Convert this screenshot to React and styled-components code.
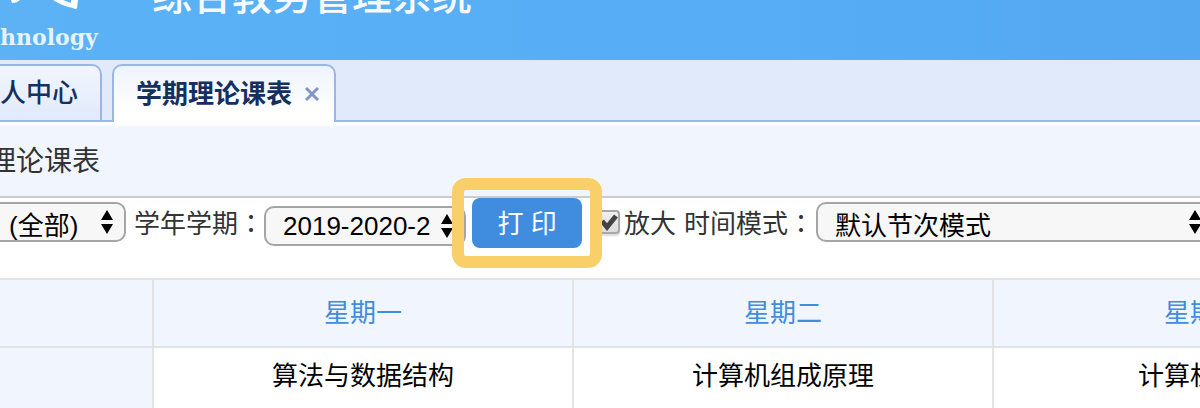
import React from "react";
import styled, { createGlobalStyle, css } from "styled-components";

const GlobalStyle = createGlobalStyle`
  *, *::before, *::after { box-sizing: border-box; }
  body {
    margin: 0;
    background: #fff;
    color: #333;
    font: 26px/36px "Liberation Sans", "Noto Sans CJK SC", sans-serif;
  }
`;

const Page = styled.div`
  min-height: 100vh;
  overflow: hidden;
`;

const Banner = styled.header`
  display: flex;
  align-items: flex-end;
  height: 60px;
  overflow: hidden;
  color: #fff;
  background: linear-gradient(90deg, #5cb2f5, #57adf6 60%, #53a8f1);
`;

const School = styled.div`
  display: flex;
  flex-direction: column;
  justify-content: flex-end;
  flex: none;
  width: 152px;
  height: 60px;
  padding-bottom: 8px;
`;

const LogoMark = styled.svg`
  display: block;
  flex: none;
  width: 100px;
  height: 12px;
  margin-bottom: 10px;
`;

const SchoolName = styled.span`
  font: bold 22px/30px "DejaVu Serif", serif;
  opacity: 0.85;
`;

const SystemName = styled.h1`
  margin: 0 0 40px;
  flex: none;
  font-size: 40px;
  line-height: 48px;
  font-weight: 500;
  opacity: 0.95;
`;

const TabBar = styled.nav`
  display: flex;
  gap: 10px;
  padding: 4px 0 0;
  background: #e1eafb;
  border-bottom: 2px solid #9bb6e4;
`;

const Tab = styled.div`
  display: flex;
  align-items: center;
  gap: 10px;
  height: 56px;
  padding: 0 22px;
  border: 2px solid #9bb6e4;
  border-bottom: 0;
  border-radius: 10px 10px 0 0;
  background: linear-gradient(#f1f5fe, #e1eafb);
  &:first-child { margin-left: -50px; }
  ${(p) => p.$active && css`
    height: 58px;
    margin-bottom: -2px;
    padding-right: 12px;
    background: linear-gradient(#eef3fe, #fff 80%);
  `}
`;

const TabLink = styled.a`
  color: #15305f;
  font-weight: ${(p) => (p.$active ? 700 : 500)};
  text-decoration: none;
  white-space: nowrap;
`;

const CloseButton = styled.button`
  display: grid;
  place-items: center;
  width: 20px;
  height: 20px;
  padding: 0;
  border: 0;
  background: none;
`;

const TitleBar = styled.div`
  padding: 18px 0 16px;
  border-top: 4px solid #fff;
  border-bottom: 2px solid #ccc;
  background: #f1f5fe;
`;

const Title = styled.h2`
  margin: 0 0 0 -68px;
  font-size: 28px;
  line-height: 36px;
  font-weight: 400;
`;

const Filters = styled.form`
  display: flex;
  align-items: flex-start;
  height: 80px;
  white-space: nowrap;
`;

const FilterLabel = styled.label`
  flex: none;
  margin-left: ${(p) => p.$gap || 0}px;
  line-height: 52px;
`;

const Colon = styled.span`
  font-family: "Noto Sans CJK TC", sans-serif;
  line-height: 1;
`;

const SelectBox = styled.div`
  display: grid;
  align-items: center;
  flex: ${(p) => (p.$width ? "none" : "1")};
  width: ${(p) => (p.$width ? `${p.$width}px` : "auto")};
  margin-top: ${(p) => (p.$low ? 8 : 4)}px;
  & > * { grid-area: 1 / 1; }
  & > svg { justify-self: end; margin-right: 13px; pointer-events: none; }
  &:first-child { margin-left: -10px; }
  &:last-child { margin: 4px -14px 0 2px; }
`;

const Select = styled.select`
  appearance: none;
  width: 100%;
  height: 40px;
  padding: ${(p) => (p.$low ? "0 17px 2px" : "4px 17px 0")};
  border: 2px solid #a5a5a5;
  border-radius: 10px;
  background: #f7f7f7;
  color: #000;
  font: inherit;
`;

const PrintSpot = styled.div`
  position: relative;
  z-index: 1;
  flex: none;
  margin: 0 14px 0 6px;
  &::after {
    content: "";
    position: absolute;
    inset: -20px;
    border: 12px solid #f8cf68;
    border-radius: 14px;
    pointer-events: none;
  }
`;

const PrintButton = styled.button`
  display: block;
  width: 110px;
  height: 50px;
  padding: 2px 0 0;
  border: 0;
  border-radius: 8px;
  background: #408de0;
  color: #fff;
  font: inherit;
`;

const CheckBox = styled.span`
  display: grid;
  flex: none;
  width: 24px;
  height: 24px;
  margin: 12px 4px 0 0;
  & > * { grid-area: 1 / 1; }
  & > svg { pointer-events: none; }
`;

const CheckInput = styled.input`
  appearance: none;
  width: 24px;
  height: 24px;
  margin: 0;
  border: 2px solid #a8a8a8;
  border-radius: 4px;
  background: linear-gradient(#f0f0f0, #dcdcdc);
  box-shadow: 0 2px 2px #ddd;
`;

const Timetable = styled.table`
  table-layout: fixed;
  width: calc(154px + 105vw);
  border-collapse: separate;
  border-spacing: 0;
  border-top: 2px solid #e3e3e3;
`;

const cell = css`
  padding: 0;
  border: solid #e3e3e3;
  border-width: 0 2px 0 0;
  font-weight: 400;
  text-align: center;
`;

const HeadCell = styled.th`
  ${cell}
  width: ${(p) => (p.$corner ? "154px" : "35vw")};
  height: 68px;
  border-bottom-width: 2px;
  background: #f1f5fe;
  color: #408de0;
`;

const SideCell = styled.th`
  ${cell}
  background: #f1f5fe;
`;

const Cell = styled.td`
  ${cell}
  height: 60px;
  padding-top: 10px;
  vertical-align: top;
  color: #000;
`;

const Arrows = () => (
  <svg width="12" height="24" viewBox="0 0 12 24" aria-hidden="true">
    <path d="M6 0 12 10H0ZM0 14H12L6 24Z" fill="#000" />
  </svg>
);

const days = ["星期一", "星期二", "星期三"];
const courses = ["算法与数据结构", "计算机组成原理", "计算机网络"];

export default function App() {
  return (
    <Page>
      <GlobalStyle />
      <Banner>
        <School>
          <LogoMark viewBox="0 0 100 12" aria-hidden="true">
            <path d="M11 0H20Q17 3 12 3ZM53 0H63L71 3V0H78L77 8Q76 10 73 8Q62 6 53 0Z" fill="#fff" />
          </LogoMark>
          <SchoolName>hnology</SchoolName>
        </School>
        <SystemName>综合教务管理系统</SystemName>
      </Banner>
      <TabBar>
        <Tab>
          <TabLink href="#home">个人中心</TabLink>
        </Tab>
        <Tab $active>
          <TabLink href="#timetable" $active>学期理论课表</TabLink>
          <CloseButton type="button" aria-label="关闭">
            <svg width="14" height="14" viewBox="0 0 14 14">
              <path d="M1 1 13 13M13 1 1 13" stroke="#8296c4" strokeWidth="3" />
            </svg>
          </CloseButton>
        </Tab>
      </TabBar>
      <TitleBar>
        <Title>学期理论课表</Title>
      </TitleBar>
      <Filters>
        <SelectBox $width={136}>
          <Select aria-label="范围">
            <option>(全部)</option>
          </Select>
          <Arrows />
        </SelectBox>
        <FilterLabel htmlFor="term" $gap={8}>学年学期<Colon>：</Colon></FilterLabel>
        <SelectBox $width={202} $low>
          <Select id="term" $low>
            <option>2019-2020-2</option>
          </Select>
          <Arrows />
        </SelectBox>
        <PrintSpot>
          <PrintButton type="button">打 印</PrintButton>
        </PrintSpot>
        <CheckBox>
          <CheckInput id="zoom" type="checkbox" defaultChecked />
          <svg width="24" height="24" viewBox="0 0 24 24" aria-hidden="true">
            <path d="M6 11 11 17 20 6" fill="none" stroke="#444" strokeWidth="5" />
          </svg>
        </CheckBox>
        <FilterLabel htmlFor="zoom">放大</FilterLabel>
        <FilterLabel htmlFor="mode" $gap={8}>时间模式<Colon>：</Colon></FilterLabel>
        <SelectBox>
          <Select id="mode">
            <option>默认节次模式</option>
          </Select>
          <Arrows />
        </SelectBox>
      </Filters>
      <Timetable>
        <thead>
          <tr>
            <HeadCell $corner />
            {days.map((d) => <HeadCell key={d} scope="col">{d}</HeadCell>)}
          </tr>
        </thead>
        <tbody>
          <tr>
            <SideCell scope="row" />
            {courses.map((c) => <Cell key={c}>{c}</Cell>)}
          </tr>
        </tbody>
      </Timetable>
    </Page>
  );
}
